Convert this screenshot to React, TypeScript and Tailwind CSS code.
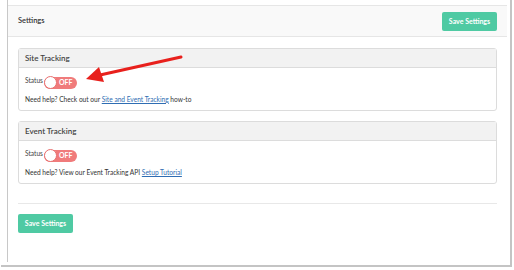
import React from "react";

const Toggle = () => (
  <div className="relative flex h-[12px] w-[33px] items-center rounded-full bg-[#f07b7b]">
    <div className="absolute left-0 top-[-0.5px] h-[13px] w-[13px] rounded-full border border-[#e87070] bg-white" />
    <span className="ml-[15px] text-[7px] font-bold leading-none text-white">OFF</span>
  </div>
);

const Panel = ({ title, children }: { title: string; children: React.ReactNode }) => (
  <div className="rounded-[3px] border border-[#dcdcdc] bg-white">
    <div className="flex h-[19px] items-center border-b border-[#dcdcdc] bg-[#f2f2f2] px-[6px] text-[8px] font-semibold text-[#444]">
      {title}
    </div>
    <div className="flex h-[42px] flex-col justify-center gap-[7px] px-[6px] pt-[1px]">{children}</div>
  </div>
);

const SaveButton = () => (
  <button className="block h-[19px] w-[55px] rounded-[2px] bg-[#4fcaa3] text-[7px] font-bold text-white">
    Save Settings
  </button>
);

export default function App() {
  return (
    <div className="relative h-[270px] w-[514px] bg-white" style={{ fontFamily: "Lato, 'Open Sans', sans-serif" }}>
      <div className="ml-[1px] h-[267px] w-[511px] border-b-2 border-r-2 border-[#c4c4c4] bg-white pl-[6px]">
        <div className="h-[262px] border-l border-[#c8c8c8]">
          {/* Header */}
          <div className="mr-[3px] pt-[5px]">
            <div className="flex h-[32px] items-center justify-between border-b border-t border-[#e6e6e6] bg-[#f9f9f9] pl-[10px] pr-[10px]">
              <span className="text-[7.5px] font-semibold text-[#333]">Settings</span>
              <SaveButton />
            </div>
          </div>

          {/* Body */}
          <div className="mr-[3px] flex flex-col gap-[10px] px-[10px] pt-[11px]">
            <Panel title="Site Tracking">
              <div className="flex items-center gap-[1px] text-[6.6px] text-[#444]">
                <span className="-mt-[3px]">Status</span>
                <Toggle />
              </div>
              <div className="text-[6.6px] leading-none text-[#333]">
                Need help? Check out our{" "}
                <span className="text-[#2f6db3] underline">Site and Event Tracking</span> how-to
              </div>
            </Panel>
            <Panel title="Event Tracking">
              <div className="flex items-center gap-[1px] text-[6.6px] text-[#444]">
                <span className="-mt-[3px]">Status</span>
                <Toggle />
              </div>
              <div className="text-[6.6px] leading-none text-[#333]">
                Need help? View our Event Tracking API{" "}
                <span className="text-[#2f6db3] underline">Setup Tutorial</span>
              </div>
            </Panel>
            <div className="mt-[9px] border-t border-[#e8e8e8] pt-[10px]">
              <SaveButton />
            </div>
          </div>
        </div>
      </div>

      {/* Annotation arrow */}
      <svg className="absolute left-0 top-0" width="514" height="270" viewBox="0 0 514 270">
        <line x1="181" y1="57" x2="100" y2="75" stroke="#e8201c" strokeWidth="3" strokeLinecap="round" />
        <polygon points="86,79 99,67 104,82" fill="#e8201c" />
      </svg>
    </div>
  );
}
